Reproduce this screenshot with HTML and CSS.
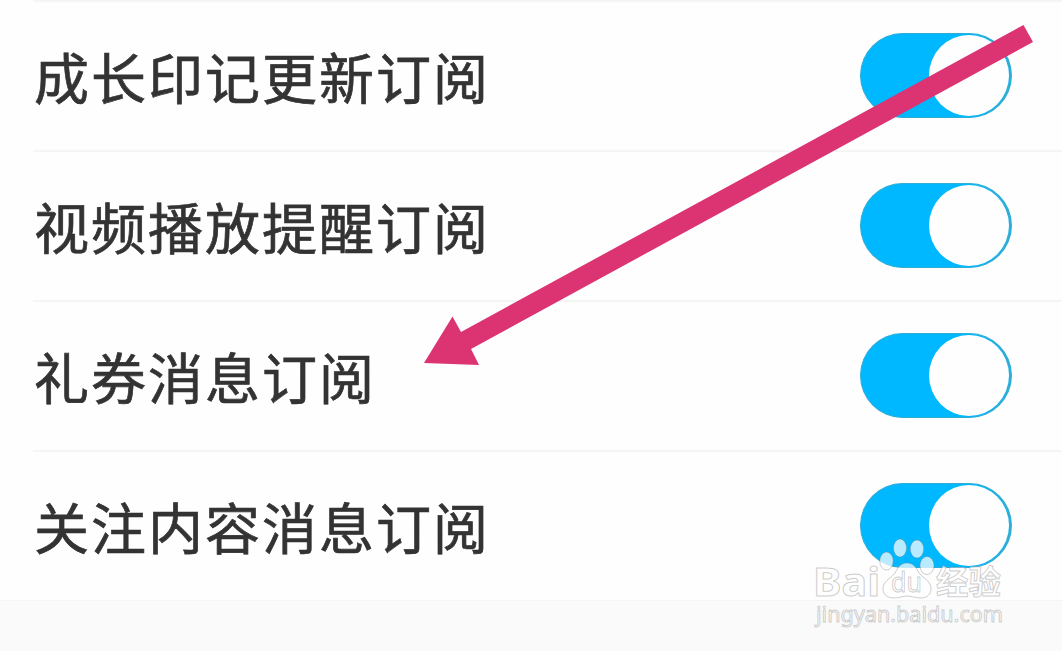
FILE: index.html
```html
<!DOCTYPE html>
<html lang="zh-CN">
<head>
    <meta charset="UTF-8">
    <meta name="viewport" content="width=device-width, initial-scale=1.0">
    <title>消息订阅</title>
    <link rel="stylesheet" href="styles.css">
</head>
<body>
    <div class="settings">
        <div class="setting-row">
            <span class="label">成长印记更新订阅</span>
            <span class="toggle"><span class="knob"></span></span>
        </div>
        <div class="setting-row">
            <span class="label">视频播放提醒订阅</span>
            <span class="toggle"><span class="knob"></span></span>
        </div>
        <div class="setting-row">
            <span class="label">礼券消息订阅</span>
            <span class="toggle"><span class="knob"></span></span>
        </div>
        <div class="setting-row">
            <span class="label">关注内容消息订阅</span>
            <span class="toggle"><span class="knob"></span></span>
        </div>
    </div>

    <svg class="arrow" width="1062" height="651" viewBox="0 0 1062 651">
        <polygon points="424,363 452.500,316.500 461,332 1023.500,25 1033,42 471,349 479,365"/>
    </svg>

    <svg class="watermark" width="210" height="100" viewBox="805 535 210 100">
        <g class="mark">
            <text class="brand" x="813" y="596" textLength="67" lengthAdjust="spacingAndGlyphs">Bai</text>
            <ellipse cx="886.500" cy="561" rx="6.700" ry="9"/>
            <ellipse cx="900" cy="548" rx="6.500" ry="9"/>
            <ellipse cx="917" cy="549" rx="6.700" ry="9"/>
            <ellipse cx="927" cy="565.500" rx="7" ry="9"/>
            <path d="M907 563C901 563 898 567 895 573C890 579 883 581 883 589C883 595 888 598 894 598C899 598 903 596 907 596C911 596 916 598 921 598C927 598 931 594 931 589C931 581 924 579 919 573C916 567 913 563 907 563Z"/>
            <text class="du" x="891" y="592" textLength="31" lengthAdjust="spacingAndGlyphs">du</text>
            <text class="cn" x="936" y="594" textLength="65" lengthAdjust="spacingAndGlyphs">经验</text>
            <text class="site" x="816" y="621.500" textLength="187" lengthAdjust="spacingAndGlyphs">jingyan.baidu.com</text>
        </g>
    </svg>
</body>
</html>
```
FILE: styles.css
```css
* {
    box-sizing: border-box;
}
body {
    margin: 0;
    height: 651px;
    position: relative;
    overflow: hidden;
    background: #fafafa;
    font-family: "Noto Sans CJK SC", sans-serif;
    color: #333;
}
.settings {
    height: 601px;
    background: #fefefe;
    border-bottom: 1px solid #f4f4f4;
    padding-left: 33px;
}
.setting-row {
    height: 150px;
    display: flex;
    align-items: center;
    justify-content: space-between;
    padding: 0 50px 2px 1px;
    border-top: 2px solid #f4f5f5;
}
.label {
    font-size: 55px;
    line-height: 84px;
    letter-spacing: 2px;
    margin-bottom: 1px;
    white-space: nowrap;
    -webkit-text-stroke: 0.7px #333;
}
.toggle {
    width: 152px;
    height: 85px;
    border-radius: 43px;
    background: #00b8ff;
    border: 1px solid #2fadd5;
    border-right-width: 3px;
    display: flex;
    align-items: center;
    justify-content: flex-end;
}
.knob {
    width: 80px;
    height: 81px;
    border-radius: 50%;
    background: #fefefe;
}
.arrow {
    position: absolute;
    top: 0;
    left: 0;
    fill: #dc3373;
}
.watermark {
    position: absolute;
    top: 535px;
    left: 805px;
}
.mark {
    fill: rgba(255, 255, 255, 0.72);
    stroke: rgba(130, 130, 130, 0.4);
    stroke-width: 1;
}
.brand {
    font: bold 39px "Noto Sans", sans-serif;
}
.du {
    font: 28px "Noto Sans", sans-serif;
}
.cn {
    font: bold 33px "Noto Sans CJK SC", sans-serif;
}
.site {
    font: 22px "Noto Sans", sans-serif;
}
```
